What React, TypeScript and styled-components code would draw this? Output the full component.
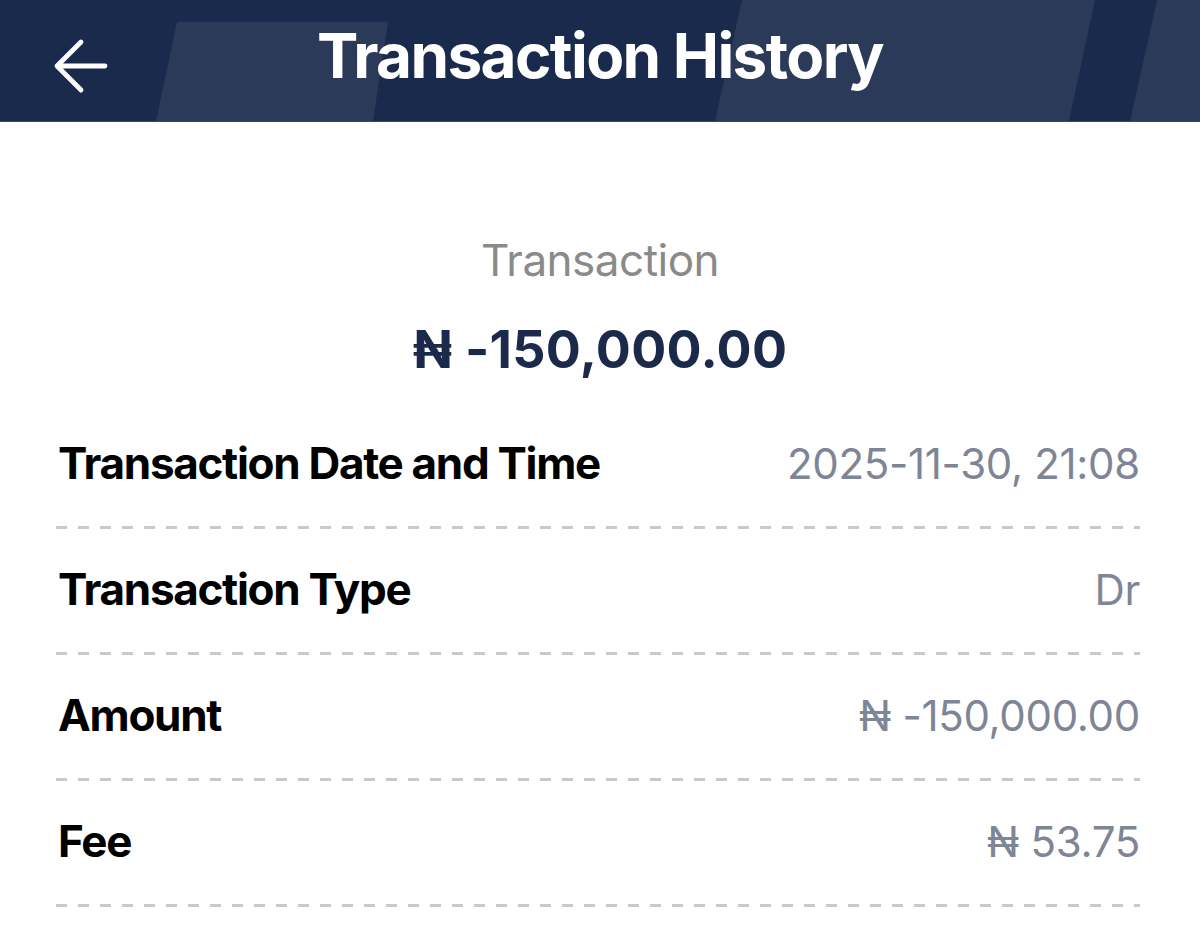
import styled, { createGlobalStyle } from 'styled-components';

const GlobalStyle = createGlobalStyle`
  html, body {
    margin: 0;
    padding: 0;
    background: #ffffff;
  }
  body {
    font-family: "Inter", "Noto Sans", "DejaVu Sans", sans-serif;
    -webkit-font-smoothing: antialiased;
  }
`;

const Page = styled.div`
  width: 1200px;
  min-height: 952px;
  background: #ffffff;
`;

const Header = styled.header`
  position: relative;
  display: grid;
  grid-template-columns: 1fr auto 1fr;
  align-items: center;
  height: 122px;
  box-sizing: border-box;
  background-color: #1a2a4c;
  border-bottom: 1px solid #3a4960;
  overflow: hidden;
`;

const HeaderDecor = styled.svg`
  position: absolute;
  inset: 0;
  width: 100%;
  height: 100%;
  pointer-events: none;
`;

const BackButton = styled.button`
  position: relative;
  justify-self: start;
  display: flex;
  align-items: center;
  margin: 10px 0 0 48px;
  padding: 0;
  border: 0;
  background: transparent;
  cursor: pointer;
`;

const Title = styled.h1`
  position: relative;
  margin: 0;
  padding-bottom: 10px;
  font-size: 62px;
  line-height: 63px;
  font-weight: 700;
  color: #ffffff;
  letter-spacing: -1.6px;
  white-space: nowrap;
`;

const Summary = styled.section`
  display: flex;
  flex-direction: column;
  align-items: center;
  padding-top: 116px;
`;

const SummaryLabel = styled.p`
  margin: 0;
  font-size: 44px;
  line-height: 44px;
  font-weight: 400;
  color: #8a8a8a;
  letter-spacing: -0.5px;
`;

const SummaryAmount = styled.p`
  margin: 42px 0 0;
  font-size: 52px;
  line-height: 52px;
  font-weight: 700;
  color: #1b2a4a;
  letter-spacing: 0.3px;
`;

const Details = styled.div`
  display: flex;
  flex-direction: column;
  padding: 65px 60px 0 56px;
`;

const ItemRow = styled.div`
  display: flex;
  align-items: baseline;
  justify-content: space-between;
  padding-left: 2px;
  line-height: 44px;
`;

const ItemLabel = styled.span`
  font-size: 44px;
  font-weight: 700;
  color: #000000;
  letter-spacing: -1.3px;
`;

const ItemValue = styled.span`
  font-size: 42px;
  font-weight: 400;
  color: #7d8596;
  letter-spacing: -0.3px;
`;

const Divider = styled.div`
  height: 3px;
  margin: 40px 0 38px;
  background-image: repeating-linear-gradient(
    to right,
    #c9c9c9 0,
    #c9c9c9 11px,
    transparent 11px,
    transparent 22px
  );
`;

type Item = { label: string; value: string };

const ITEMS: Item[] = [
  { label: 'Transaction Date and Time', value: '2025-11-30, 21:08' },
  { label: 'Transaction Type', value: 'Dr' },
  { label: 'Amount', value: '₦ -150,000.00' },
  { label: 'Fee', value: '₦ 53.75' },
];

function BackArrow() {
  return (
    <svg width="60" height="56" viewBox="0 0 60 56" fill="none">
      <path
        d="M33 4 L9 28 L33 52 M9 28 H57"
        stroke="#ffffff"
        strokeWidth="4.8"
        strokeLinecap="round"
        strokeLinejoin="round"
      />
    </svg>
  );
}

export default function App(): JSX.Element {
  return (
    <Page>
      <GlobalStyle />
      <Header>
        <HeaderDecor viewBox="0 0 1200 122" preserveAspectRatio="none" aria-hidden="true">
          <polygon points="177,22 388,22 373,122 156,122" fill="#2a3a58" />
          <polygon points="742,0 1095,0 1069,122 715,122" fill="#2a3a58" />
          <polygon points="1157,0 1200,0 1200,122 1130,122" fill="#2a3a58" />
        </HeaderDecor>
        <BackButton aria-label="Back">
          <BackArrow />
        </BackButton>
        <Title>Transaction History</Title>
        <div />
      </Header>

      <Summary>
        <SummaryLabel>Transaction</SummaryLabel>
        <SummaryAmount>₦ -150,000.00</SummaryAmount>
      </Summary>

      <Details>
        {ITEMS.map((item) => (
          <div key={item.label}>
            <ItemRow>
              <ItemLabel>{item.label}</ItemLabel>
              <ItemValue>{item.value}</ItemValue>
            </ItemRow>
            <Divider />
          </div>
        ))}
      </Details>
    </Page>
  );
}
